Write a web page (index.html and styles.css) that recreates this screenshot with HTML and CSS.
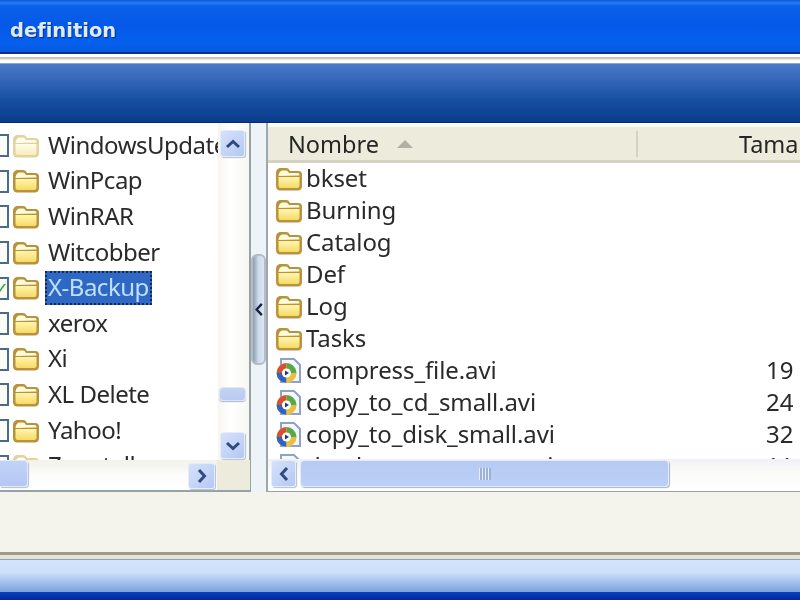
FILE: index.html
```html
<!DOCTYPE html>
<html lang="es">
<head>
<meta charset="utf-8">
<title>definition</title>
<link rel="stylesheet" href="styles.css">
</head>
<body>
<svg class="defs" width="0" height="0" aria-hidden="true">
  <defs>
    <linearGradient id="fg" x1="0" y1="0" x2="0" y2="1"><stop offset="0" stop-color="#fff6ac"/><stop offset="1" stop-color="#f7da66"/></linearGradient>
    <linearGradient id="fp" x1="0" y1="0" x2="0" y2="1"><stop offset="0" stop-color="#fffde8"/><stop offset="1" stop-color="#f8ecba"/></linearGradient>
    <symbol id="folder" viewBox="0 0 28 24">
      <path d="M1 6C1 3 3 1 6 1h5c2 0 3 1 4 3h8c3 0 4 1.500 4 4v11c0 3-2 4.500-4 4.500H5c-2 0-4-1.500-4-4.500z" fill="#b8923c"/>
      <path d="M3.500 9C4 5 5.500 3.500 8 3.500h3c1.500 0 2 1 3 2.500h8.500c1.500 0 2 .8 2 2.500z" fill="#fffbdc"/>
      <path d="M3.500 10h21v8.500c0 1.500-.8 2.500-2 2.500H5.500c-1.200 0-2-1-2-2.500z" fill="url(#fg)"/>
    </symbol>
    <symbol id="folder-pale" viewBox="0 0 28 24">
      <path d="M1 6C1 3 3 1 6 1h5c2 0 3 1 4 3h8c3 0 4 1.500 4 4v11c0 3-2 4.500-4 4.500H5c-2 0-4-1.500-4-4.500z" fill="#e2d2a0"/>
      <path d="M3.500 9C4 5 5.500 3.500 8 3.500h3c1.500 0 2 1 3 2.500h8.500c1.500 0 2 .8 2 2.500z" fill="#fffdf0"/>
      <path d="M3.500 10h21v8.500c0 1.500-.8 2.500-2 2.500H5.500c-1.200 0-2-1-2-2.500z" fill="url(#fp)"/>
    </symbol>
    <symbol id="video" viewBox="0 0 28 28">
      <path d="M6 2h13l6 6v17H6z" fill="#f4f7fb" stroke="#8fa2c0" stroke-width="2"/>
      <circle cx="11.500" cy="16" r="10" fill="#e8e4c8"/>
      <path d="M11.500 6a10 10 0 0 0-10 10h6a4 4 0 0 1 4-4z" fill="#d9502c"/>
      <path d="M1.500 16a10 10 0 0 0 10 10v-6a4 4 0 0 1-4-4z" fill="#2f63c0"/>
      <path d="M11.500 26a10 10 0 0 0 10-10h-6a4 4 0 0 1-4 4z" fill="#e8c23c"/>
      <path d="M11.500 6a10 10 0 0 1 10 10h-6a4 4 0 0 0-4-4z" fill="#58a848"/>
      <circle cx="11.500" cy="16" r="4.500" fill="#fff"/>
      <path d="M10 13.500l4 2.500-4 2.500z" fill="#27385c"/>
    </symbol>
    <symbol id="up" viewBox="0 0 16 10"><path d="M2 8l6-5.500L14 8" fill="none" stroke="#30497f" stroke-width="3"/></symbol>
    <symbol id="down" viewBox="0 0 16 10"><path d="M2 2l6 5.500L14 2" fill="none" stroke="#30497f" stroke-width="3"/></symbol>
    <symbol id="left" viewBox="0 0 10 16"><path d="M8 2L2.500 8 8 14" fill="none" stroke="#30497f" stroke-width="3"/></symbol>
    <symbol id="right" viewBox="0 0 10 16"><path d="M2 2l5.500 6L2 14" fill="none" stroke="#30497f" stroke-width="3"/></symbol>
  </defs>
</svg>

<div class="window">
  <header class="titlebar"><span class="title">definition</span></header>
  <div class="rule"></div>
  <div class="band"></div>

  <main class="panes">
    <section class="tree">
      <div class="tree-top">
        <ul class="tree-list">
          <li class="tree-row"><span class="check"></span><svg class="ticon"><use href="#folder-pale"/></svg><span class="tname">WindowsUpdate</span></li>
          <li class="tree-row"><span class="check"></span><svg class="ticon"><use href="#folder"/></svg><span class="tname">WinPcap</span></li>
          <li class="tree-row"><span class="check"></span><svg class="ticon"><use href="#folder"/></svg><span class="tname">WinRAR</span></li>
          <li class="tree-row"><span class="check"></span><svg class="ticon"><use href="#folder"/></svg><span class="tname">Witcobber</span></li>
          <li class="tree-row"><span class="check on">✓</span><svg class="ticon"><use href="#folder"/></svg><span class="tname selected">X-Backup</span></li>
          <li class="tree-row"><span class="check"></span><svg class="ticon"><use href="#folder"/></svg><span class="tname">xerox</span></li>
          <li class="tree-row"><span class="check"></span><svg class="ticon"><use href="#folder"/></svg><span class="tname">Xi</span></li>
          <li class="tree-row"><span class="check"></span><svg class="ticon"><use href="#folder"/></svg><span class="tname">XL Delete</span></li>
          <li class="tree-row"><span class="check"></span><svg class="ticon"><use href="#folder"/></svg><span class="tname">Yahoo!</span></li>
          <li class="tree-row"><span class="check"></span><svg class="ticon"><use href="#folder-pale"/></svg><span class="tname">Zonetalk</span></li>
        </ul>
        <div class="vscroll">
          <div class="sbtn sbtn-v"><svg class="arrow-h"><use href="#up"/></svg></div>
          <div class="vtrack"><div class="vthumb"></div></div>
          <div class="sbtn sbtn-v"><svg class="arrow-h"><use href="#down"/></svg></div>
        </div>
      </div>
      <div class="hscroll">
        <div class="hthumb-small"></div>
        <div class="hgap"></div>
        <div class="sbtn sbtn-h"><svg class="arrow-v"><use href="#right"/></svg></div>
        <div class="corner"></div>
      </div>
    </section>

    <div class="splitter">
      <div class="grip"><svg class="grip-arrow" viewBox="0 0 10 16"><path d="M8 2L2.500 8 8 14" fill="none" stroke="#16233f" stroke-width="2.500"/></svg></div>
    </div>

    <section class="files">
      <div class="head">
        <div class="hcol hname"><span>Nombre</span><span class="sort"></span></div>
        <div class="hcol hsize"><span>Tamaño</span></div>
      </div>
      <ul class="list">
        <li class="row"><svg class="ficon"><use href="#folder"/></svg><span class="fname">bkset</span></li>
        <li class="row"><svg class="ficon"><use href="#folder"/></svg><span class="fname">Burning</span></li>
        <li class="row"><svg class="ficon"><use href="#folder"/></svg><span class="fname">Catalog</span></li>
        <li class="row"><svg class="ficon"><use href="#folder"/></svg><span class="fname">Def</span></li>
        <li class="row"><svg class="ficon"><use href="#folder"/></svg><span class="fname">Log</span></li>
        <li class="row"><svg class="ficon"><use href="#folder"/></svg><span class="fname">Tasks</span></li>
        <li class="row"><svg class="ficon"><use href="#video"/></svg><span class="fname">compress_file.avi</span><span class="fsize">19 KB</span></li>
        <li class="row"><svg class="ficon"><use href="#video"/></svg><span class="fname">copy_to_cd_small.avi</span><span class="fsize">24 KB</span></li>
        <li class="row"><svg class="ficon"><use href="#video"/></svg><span class="fname">copy_to_disk_small.avi</span><span class="fsize">32 KB</span></li>
        <li class="row"><svg class="ficon"><use href="#video"/></svg><span class="fname">database_compact.avi</span><span class="fsize">11 KB</span></li>
      </ul>
      <div class="hscroll-r">
        <div class="sbtn sbtn-hl"><svg class="arrow-v"><use href="#left"/></svg></div>
        <div class="hthumb"><span class="ridges"></span></div>
      </div>
    </section>
  </main>

  <div class="footer-space"></div>
  <footer class="bottom">
    <div class="b-line1"></div>
    <div class="b-line2"></div>
    <div class="b-blue"></div>
    <div class="b-dark"></div>
  </footer>
</div>
</body>
</html>
```

FILE: styles.css
```css
* { box-sizing: border-box; }
html, body { margin: 0; padding: 0; }
body { width: 800px; height: 600px; overflow: hidden; background: #f4f3ec; font-family: "Noto Sans", "DejaVu Sans", sans-serif; color: #2a2a2a; }
ul { list-style: none; margin: 0; padding: 0; }
.defs { display: block; height: 0; }
.window { width: 800px; height: 600px; display: flex; flex-direction: column; overflow: hidden; filter: blur(.45px); }

.titlebar { height: 54px; flex: none; display: flex; align-items: center; padding: 8px 0 0 10px; border-bottom: 2px solid #0a2f8c;
  background: linear-gradient(#0a58dc 0, #2a7cf4 3px, #0a62ea 6px, #0558e8 24px, #0560ee 44px, #0a58dc 100%); }
.title { font-family: "DejaVu Sans", sans-serif; font-size: 19.500px; font-weight: 700; color: #dcebfb; text-shadow: 1px 1px 1px #0a2f7c; }

.rule { height: 10px; flex: none; background: linear-gradient(#fff 0, #fff 3px, #bdbaa8 3px, #d6d3c4 5px, #fff 6px, #fff 9px, #8ea8cc 9px); }
.band { height: 59px; flex: none; background: linear-gradient(#4a7ac8 0, #3566b8 16px, #174f9f 36px, #0a3c8e 100%); border-bottom: 1px solid #0a2a60; }

.panes { height: 369px; flex: none; display: flex; background: #f4f7fb; }

.tree { width: 251px; flex: none; display: flex; flex-direction: column; background: #fff; border-right: 2px solid #97a2a8; border-bottom: 2px solid #97a2a8; }
.tree-top { height: 337px; flex: none; display: flex; }
.tree-list { width: 218px; flex: none; overflow: hidden; padding-top: 5px; }
.tree-row { height: 35.600px; display: flex; align-items: center; white-space: nowrap; }
.check { width: 9px; height: 23px; flex: none; border: 2px solid #4c6a8c; border-left: 0; background: #fbfcf8; color: #2aa82a; font-family: "DejaVu Sans", sans-serif; font-size: 18px; line-height: 19px; font-weight: 700; overflow: hidden; text-indent: -6px; }
.ticon { width: 28px; height: 24px; flex: none; margin-left: 3px; }
.tname { margin-left: 5px; padding: 0 3px; font-size: 24px; height: 34px; line-height: 32px; letter-spacing: -.5px; }
.selected { background: #2f68c4; color: #bfe0fb; outline: 2px dotted #14294f; outline-offset: -2px; }

.vscroll { width: 31px; flex: none; display: flex; flex-direction: column; padding: 7px 4px 0 2px; background: linear-gradient(90deg, #f6f5ee, #ffffff 40%, #f7f7f2); }
.sbtn { display: flex; align-items: center; justify-content: center; background: linear-gradient(135deg, #d6e2fb, #b5c8f3); border: 1px solid #e6edf8; border-radius: 3px; box-shadow: 1px 1px 1px #b4c0d0; flex: none; }
.sbtn-v { height: 27px; }
.vtrack { flex: none; height: 275px; padding-top: 230px; }
.vthumb { height: 14px; background: linear-gradient(#c4d3f4, #b8caf2); border: 1px solid #e0e8f6; border-radius: 4px; margin: 0 -1px; box-shadow: 0 1px 1px #aab8cc; }
.arrow-h { width: 16px; height: 10px; }
.arrow-v { width: 10px; height: 16px; }

.hscroll { height: 30px; flex: none; display: flex; align-items: flex-start; background: linear-gradient(#f2f1ea, #fdfdfb 55%, #fff); }
.hthumb-small { width: 28px; height: 27px; flex: none; background: linear-gradient(#c2d3f6, #b5c8f3); border: 1px solid #e3eaf7; border-left: 0; border-radius: 0 4px 4px 0; box-shadow: 1px 1px 1px #b4c0d0; }
.hgap { width: 160px; flex: none; }
.sbtn-h { width: 27px; height: 26px; margin-top: 3px; }
.corner { width: 33px; height: 30px; flex: none; margin-left: 2px; background: #edebdc; }

.splitter { width: 15px; flex: none; display: flex; padding-top: 131px; background: #eef3f8; }
.grip { width: 15px; height: 111px; display: flex; align-items: center; justify-content: center; border: 2px solid #b4bcc4; border-radius: 6px; background: linear-gradient(90deg, #8b9dae, #ccdcea 50%, #dde6f2); }
.grip-arrow { width: 10px; height: 15px; flex: none; }

.files { flex: 1; min-width: 0; display: flex; flex-direction: column; background: #fff; border-left: 2px solid #9ca8ae; border-bottom: 2px solid #97a2a8; }
.head { height: 39px; flex: none; display: flex; align-items: center; margin-top: 1px; background: #ecebdc; border-top: 3px solid #fafaf4; border-bottom: 3px solid #d4d2c0; font-size: 23.500px; color: #262626; overflow: hidden; }
.hcol { display: flex; align-items: center; flex: none; height: 26px; }
.hname { width: 370px; padding-left: 20px; border-right: 2px solid #d4d2c2; }
.sort { width: 0; height: 0; margin-left: 18px; border-left: 8px solid transparent; border-right: 8px solid transparent; border-bottom: 8px solid #b2b0a4; }
.hsize { padding-left: 101px; white-space: nowrap; }

.list { height: 296px; flex: none; overflow: hidden; font-size: 24px; letter-spacing: -.1px; }
.row { height: 32px; display: flex; align-items: center; padding-left: 7px; white-space: nowrap; }
.ficon { width: 28px; height: 28px; flex: none; margin-right: 3px; }
.fname { width: 460px; flex: none; padding-bottom: 3px; }
.fsize { padding-bottom: 3px; }

.hscroll-r { height: 32px; flex: none; display: flex; align-items: flex-start; padding: 1px 0 0 3px; background: linear-gradient(#eff1f4, #fbfbf8 40%, #fff); }
.sbtn-hl { width: 25px; height: 27px; }
.hthumb { width: 369px; height: 27px; margin-left: 4px; flex: none; display: flex; align-items: center; justify-content: center; background: linear-gradient(#b7caf3, #bcd0f6); border: 1px solid #e4ebf7; border-radius: 4px; box-shadow: 1px 1px 1px #a9b5c6; }
.ridges { width: 12px; height: 12px; background: repeating-linear-gradient(90deg, #e8eefc 0, #e8eefc 1px, #9db0d8 1px, #9db0d8 3px); }

.footer-space { height: 60px; flex: none; background: #f4f3ec; }
.bottom { flex: 1; display: flex; flex-direction: column; }
.b-line1 { height: 3px; background: #9b9b88; flex: none; }
.b-line2 { height: 5px; background: linear-gradient(#e4e5d8, #e4e5d8 4px, #8fa0ba 4px); flex: none; }
.b-blue { height: 32px; flex: none; background: linear-gradient(#d2e3fc 0, #cfe0fa 12px, #8fb2e6 27px, #7da2d8 100%); }
.b-dark { flex: 1; background: linear-gradient(#0a40c4, #08259a); }
```
